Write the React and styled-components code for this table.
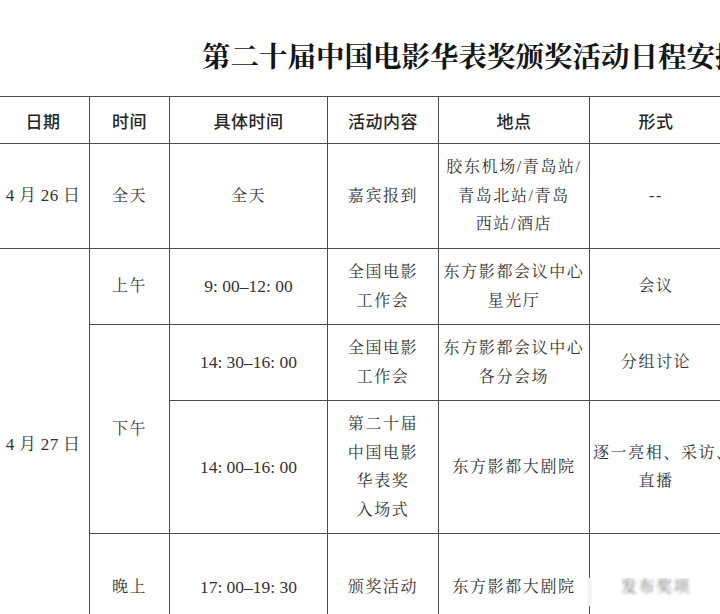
import React from 'react';
import styled, { createGlobalStyle } from 'styled-components';

const GlobalStyle = createGlobalStyle`
  html, body {
    margin: 0;
    padding: 0;
    background: #ffffff;
  }
`;

const Page = styled.div`
  position: relative;
  width: 720px;
  height: 614px;
  overflow: hidden;
  background: #ffffff;
`;

const Title = styled.h1`
  margin: 0;
  height: 96px;
  padding: 12px 0 0 202px;
  box-sizing: border-box;
  display: flex;
  align-items: center;
  white-space: nowrap;
  font-family: "Noto Serif CJK SC", "Noto Sans CJK SC", serif;
  font-size: 28.5px;
  font-weight: 700;
  letter-spacing: 0;
  color: #151515;
`;

const Table = styled.table`
  border-collapse: collapse;
  table-layout: fixed;
  width: 726px;
  margin-left: -4px;
`;

const HeadCell = styled.th`
  height: 46px;
  padding: 0;
  border: 1px solid #4d4d4d;
  font-family: "Noto Sans CJK SC", sans-serif;
  font-size: 17px;
  font-weight: 500;
  letter-spacing: 0.5px;
  color: #262626;
  text-align: center;
  vertical-align: middle;
`;

const Cell = styled.td`
  height: ${p => p.$h ? `${p.$h}px` : 'auto'};
  padding: 0 3px;
  border: 1px solid #4d4d4d;
  font-family: "Liberation Serif", "Noto Serif CJK SC", "Noto Sans CJK SC", serif;
  font-size: ${p => p.$num ? '17.5px' : '16px'};
  letter-spacing: ${p => p.$num ? '0' : '1.6px'};
  line-height: 28.5px;
  color: #333333;
  text-align: center;
  vertical-align: middle;
  white-space: nowrap;
`;

const DateText = styled.span`
  font-size: 17px;
  letter-spacing: 0.3px;
  color: #333;
`;

const FormLine = styled.span`
  display: block;
  text-align: ${p => p.$wide ? 'left' : 'center'};
`;

const Watermark = styled.div`
  position: absolute;
  left: 574px;
  top: 578px;
  width: 138px;
  height: 28px;
  background: linear-gradient(to right, rgba(255, 255, 255, 0.9), rgba(255, 255, 255, 0.3) 35%, rgba(255, 255, 255, 0.3) 80%, rgba(255, 255, 255, 0.9));
  backdrop-filter: blur(1.5px);
`;

const Lines = ({ items }) => (
  <>
    {items.map((line, i) => (
      <React.Fragment key={i}>
        {i > 0 && <br />}
        {line}
      </React.Fragment>
    ))}
  </>
);

const columns = [93, 80, 158, 111, 151, 133];

const App = () => {
  return (
    <Page>
      <GlobalStyle />
      <Title>第二十届中国电影华表奖颁奖活动日程安排</Title>
      <Table>
        <colgroup>
          {columns.map((w, i) => <col key={i} style={{ width: w }} />)}
        </colgroup>
        <thead>
          <tr>
            <HeadCell>日期</HeadCell>
            <HeadCell>时间</HeadCell>
            <HeadCell>具体时间</HeadCell>
            <HeadCell>活动内容</HeadCell>
            <HeadCell>地点</HeadCell>
            <HeadCell>形式</HeadCell>
          </tr>
        </thead>
        <tbody>
          <tr>
            <Cell $h={104}><DateText>4 月 26 日</DateText></Cell>
            <Cell>全天</Cell>
            <Cell>全天</Cell>
            <Cell>嘉宾报到</Cell>
            <Cell><Lines items={['胶东机场/青岛站/', '青岛北站/青岛', '西站/酒店']} /></Cell>
            <Cell>--</Cell>
          </tr>
          <tr>
            <Cell rowSpan={4}><DateText>4 月 27 日</DateText></Cell>
            <Cell $h={75}>上午</Cell>
            <Cell $num>9: 00–12: 00</Cell>
            <Cell><Lines items={['全国电影', '工作会']} /></Cell>
            <Cell><Lines items={['东方影都会议中心', '星光厅']} /></Cell>
            <Cell>会议</Cell>
          </tr>
          <tr>
            <Cell rowSpan={2}>下午</Cell>
            <Cell $num $h={75}>14: 30–16: 00</Cell>
            <Cell><Lines items={['全国电影', '工作会']} /></Cell>
            <Cell><Lines items={['东方影都会议中心', '各分会场']} /></Cell>
            <Cell>分组讨论</Cell>
          </tr>
          <tr>
            <Cell $num $h={132}>14: 00–16: 00</Cell>
            <Cell><Lines items={['第二十届', '中国电影', '华表奖', '入场式']} /></Cell>
            <Cell>东方影都大剧院</Cell>
            <Cell>
              <FormLine $wide>逐一亮相、采访、</FormLine>
              <FormLine>直播</FormLine>
            </Cell>
          </tr>
          <tr>
            <Cell $h={107}>晚上</Cell>
            <Cell $num>17: 00–19: 30</Cell>
            <Cell>颁奖活动</Cell>
            <Cell>东方影都大剧院</Cell>
            <Cell>发布奖项</Cell>
          </tr>
        </tbody>
      </Table>
      <Watermark />
    </Page>
  );
};

export default App;
